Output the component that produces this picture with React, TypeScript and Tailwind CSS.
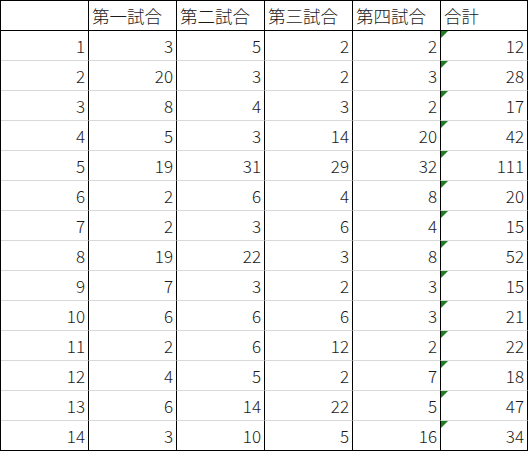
import React from "react";

const headers = ["", "第一試合", "第二試合", "第三試合", "第四試合", "合計"];

const rows: number[][] = [
  [1, 3, 5, 2, 2, 12],
  [2, 20, 3, 2, 3, 28],
  [3, 8, 4, 3, 2, 17],
  [4, 5, 3, 14, 20, 42],
  [5, 19, 31, 29, 32, 111],
  [6, 2, 6, 4, 8, 20],
  [7, 2, 3, 6, 4, 15],
  [8, 19, 22, 3, 8, 52],
  [9, 7, 3, 2, 3, 15],
  [10, 6, 6, 6, 3, 21],
  [11, 2, 6, 12, 2, 22],
  [12, 4, 5, 2, 7, 18],
  [13, 6, 14, 22, 5, 47],
  [14, 3, 10, 5, 16, 34],
];

const font = { fontFamily: '"Noto Sans CJK JP", "Noto Sans", sans-serif' };

export default function App() {
  return (
    <div className="w-[529px] h-[451px] bg-white">
      <div
        className="grid grid-cols-[88px_88px_88px_88px_88px_87px] w-[528px] border-l border-t border-black text-[#1a1a1a] font-light"
        style={font}
      >
        {headers.map((h, i) => (
          <div
            key={`h${i}`}
            className="h-[30px] border-r border-b border-black flex items-center pl-[3px] text-[17.5px] leading-none"
          >
            {h}
          </div>
        ))}
        {rows.map((r, ri) =>
          r.map((v, ci) => {
            const last = ri === rows.length - 1;
            return (
              <div
                key={`${ri}-${ci}`}
                className={`relative h-[30px] border-r border-b border-r-black flex items-center justify-end pr-[3px] text-[17px] leading-none ${
                  last ? "border-b-black" : "border-b-[#d9d9d9]"
                }`}
              >
                {ci === 5 && (
                  <svg className="absolute left-0 top-0" width="7" height="7" viewBox="0 0 7 7">
                    <polygon points="0,0 7,0 0,7" fill="#1e7d22" />
                  </svg>
                )}
                {v}
              </div>
            );
          })
        )}
      </div>
    </div>
  );
}
